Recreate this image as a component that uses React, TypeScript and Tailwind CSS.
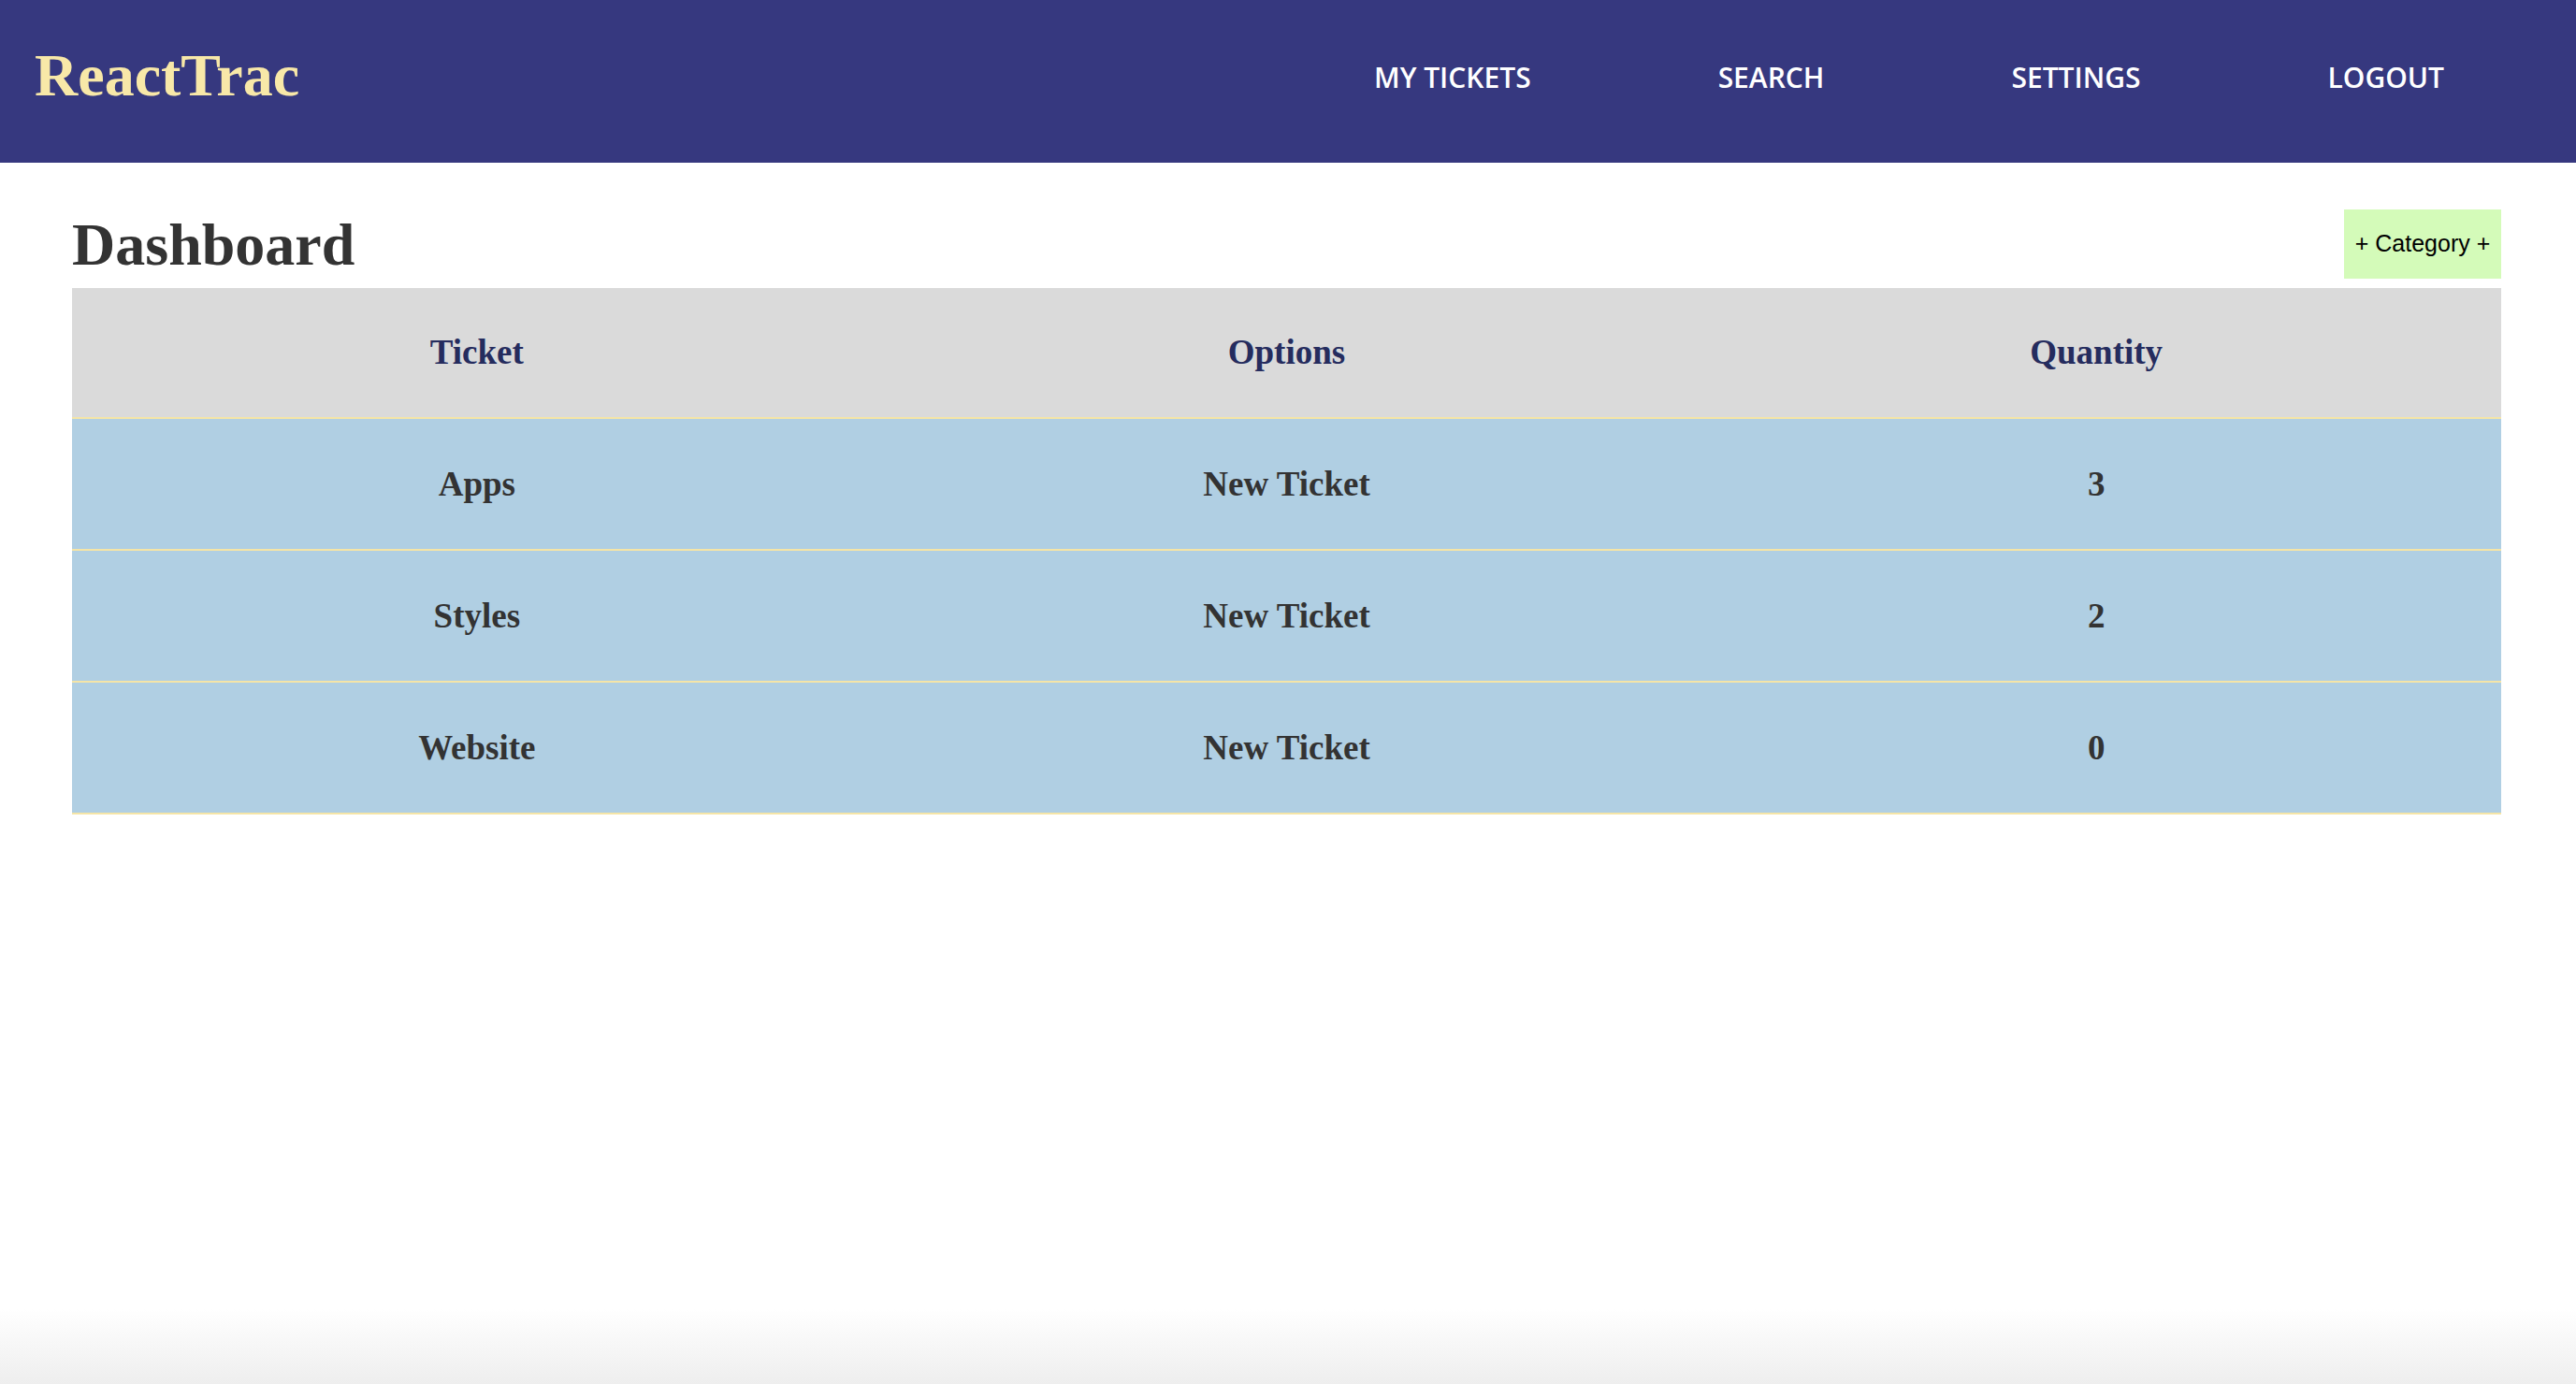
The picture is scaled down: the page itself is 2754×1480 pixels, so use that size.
import React from "react";

const rows = [
  { name: "Apps", qty: 3 },
  { name: "Styles", qty: 2 },
  { name: "Website", qty: 0 },
];

export default function App() {
  return (
    <div className="min-h-[1480px] flex flex-col bg-white">
      <header className="h-[174px] bg-[#36387f] flex items-start justify-between shrink-0">
        <div
          className="pt-[49px] pl-[37px] text-[64px] leading-[64px] font-bold text-[#f8e8a8]"
          style={{ fontFamily: '"Liberation Serif", "Times New Roman", serif' }}
        >
          ReactTrac
        </div>
        <nav
          className="h-full flex items-center gap-[200px] pr-[141px] pb-[10px] text-[30px] font-semibold text-white"
          style={{ fontFamily: '"Open Sans", "DejaVu Sans", sans-serif' }}
        >
          <a className="cursor-pointer">MY TICKETS</a>
          <a className="cursor-pointer">SEARCH</a>
          <a className="cursor-pointer">SETTINGS</a>
          <a className="cursor-pointer">LOGOUT</a>
        </nav>
      </header>

      <main className="flex-1 px-[77px] pr-[80px]">
        <div className="h-[134px] flex items-end justify-between">
          <h1
            className="mb-[14px] text-[64px] leading-[64px] font-bold text-[#333333]"
            style={{ fontFamily: '"Liberation Serif", "Times New Roman", serif' }}
          >
            Dashboard
          </h1>
          <button
            className="mb-[10px] w-[168px] h-[74px] flex items-center justify-center bg-[#d4fbb9] text-black text-[25px]"
            style={{ fontFamily: '"Liberation Sans", Arial, sans-serif' }}
          >
            + Category +
          </button>
        </div>

        <div
          className="font-bold text-[37px]"
          style={{ fontFamily: '"Liberation Serif", "Times New Roman", serif' }}
        >
          <div className="grid grid-cols-3 h-[140px] bg-[#dadada] border-b-2 border-[#f5e5a7] text-[#252c5e]">
            <div className="flex items-center justify-center">Ticket</div>
            <div className="flex items-center justify-center">Options</div>
            <div className="flex items-center justify-center">Quantity</div>
          </div>
          {rows.map((r) => (
            <div
              key={r.name}
              className="grid grid-cols-3 h-[141px] bg-[#b0cfe3] border-b-2 border-[#f5e5a7] text-[#333333]"
            >
              <div className="flex items-center justify-center">{r.name}</div>
              <div className="flex items-center justify-center cursor-pointer">New Ticket</div>
              <div className="flex items-center justify-center">{r.qty}</div>
            </div>
          ))}
        </div>
      </main>

      <div className="h-[80px] bg-gradient-to-b from-white to-[#eeeeee] shrink-0" />
    </div>
  );
}
